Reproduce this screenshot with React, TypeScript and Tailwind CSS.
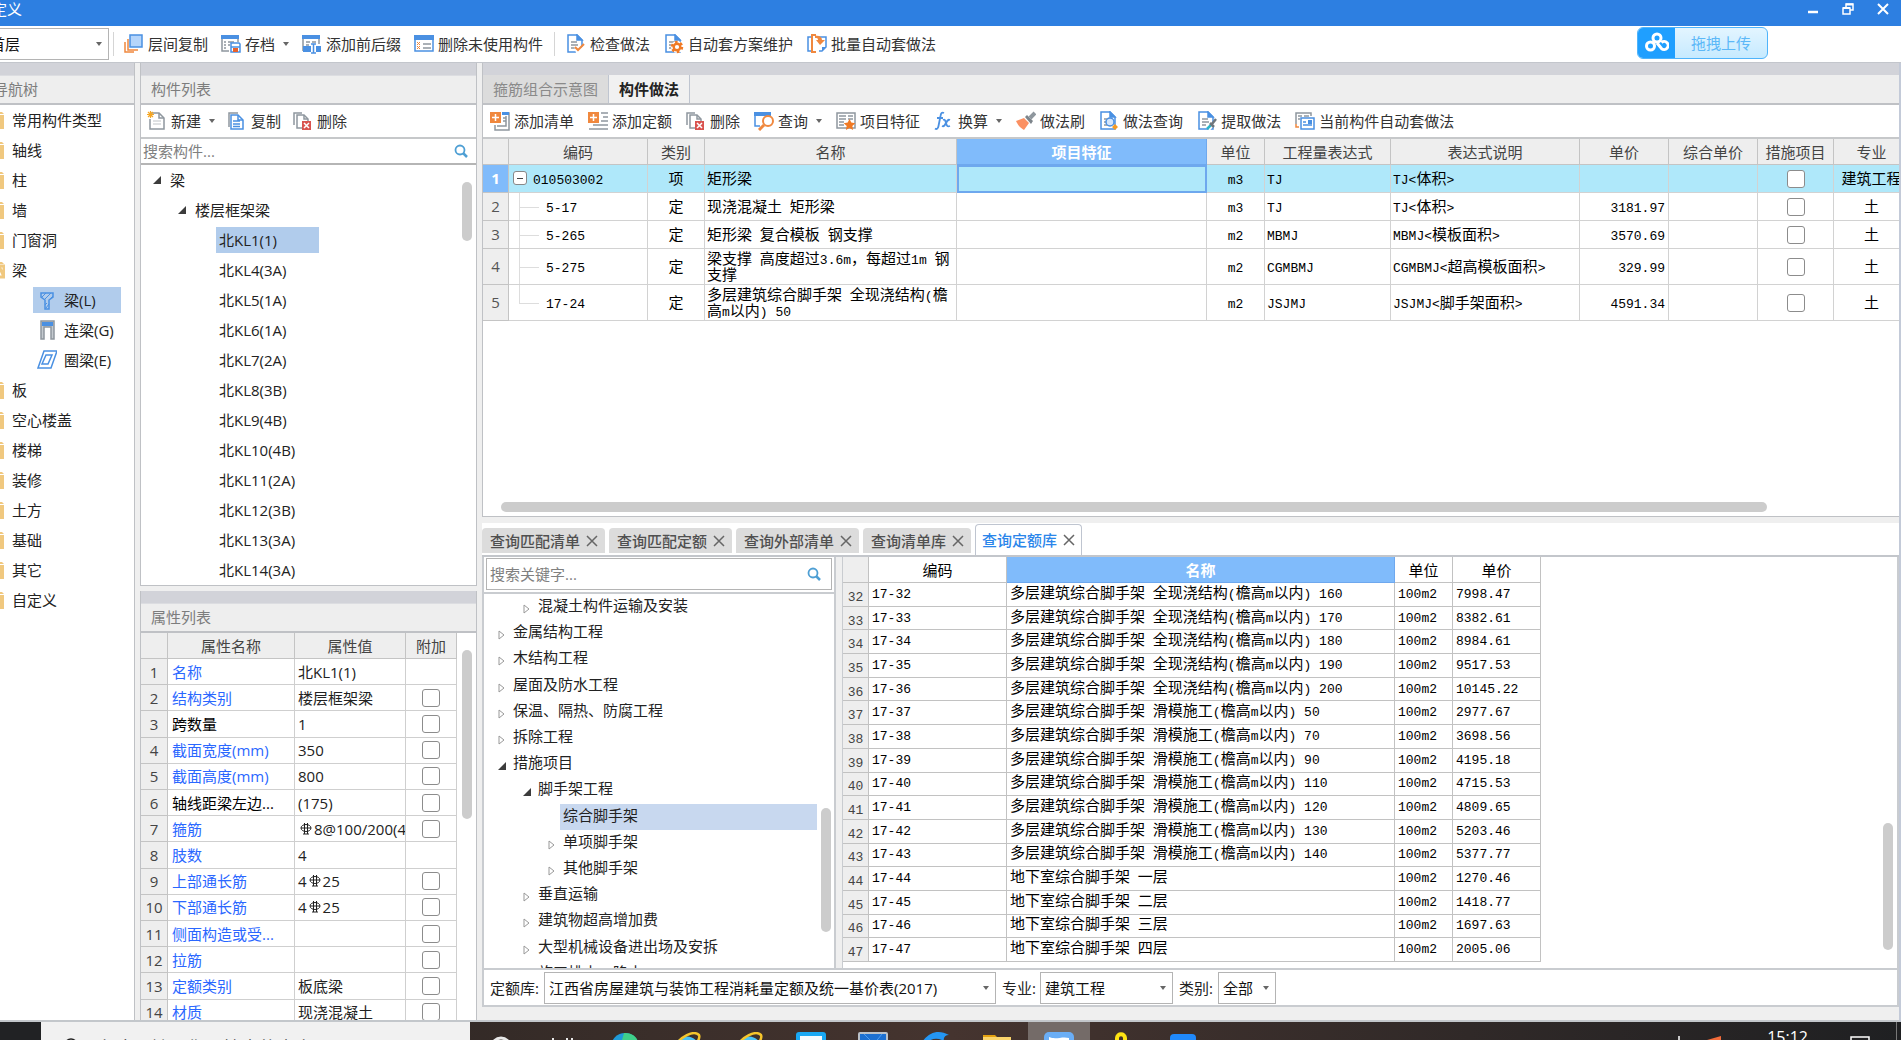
import { Fragment, type ReactNode } from 'react';

interface ToolItem {
  label: string;
  icon: ReactNode;
  caret?: boolean;
}

const BLUE = '#4a90e2';
const GRAY = '#8f979e';
const ORANGE = '#f0883e';

/* ---------- icons ---------- */

function Svg({ children }: { children: ReactNode }) {
  return (
    <svg className="h-5 w-5 shrink-0" viewBox="0 0 20 20" fill="none" strokeWidth="1.5" aria-hidden="true">
      {children}
    </svg>
  );
}

const CopyLayersIcon = () => (
  <Svg>
    <path d="M1 8v10h9" stroke={ORANGE} />
    <path d="M4 5v11h10" stroke={ORANGE} />
    <rect x="6" y="1" width="12" height="12" fill="#b5d5fb" stroke={BLUE} />
  </Svg>
);

const ArchiveIcon = () => (
  <Svg>
    <rect x="0" y="1" width="18" height="4" fill={BLUE} />
    <path d="M1 5v12h7M17 5v3" stroke={GRAY} />
    <path d="M3 8h2M3 11h2M3 14h2M7 8h6M7 11h2" stroke={GRAY} />
    <path d="M10 9h8l1 1v8h-9z" fill="#fff" stroke={BLUE} />
    <path d="M10 13h9" stroke={BLUE} />
    <rect x="12" y="14" width="5" height="4" fill="#e8612c" />
  </Svg>
);

const AffixIcon = () => (
  <Svg>
    <rect x="0" y="1" width="18" height="4" fill={BLUE} />
    <path d="M1 5v12M17 5v5" stroke={GRAY} />
    <path d="M4 8h4M4 11h3M10 8h4" stroke={GRAY} />
    <path d="M1 12h8v6H1zM14 12h5v6h-5z" fill={BLUE} />
    <path d="M9 10h5M11.500 10v9M9 19h5" stroke={BLUE} />
  </Svg>
);

const DeleteUnusedIcon = () => (
  <Svg>
    <rect x="1" y="2" width="18" height="15" fill="#fff" stroke={BLUE} />
    <rect x="0" y="1" width="20" height="5" fill={BLUE} />
    <path d="M3 8l3 3M6 8l-3 3M3 12l3 3M6 12l-3 3" stroke={ORANGE} strokeWidth="1" />
    <path d="M9 10h8M9 14h8" stroke={GRAY} />
  </Svg>
);

const DocBase = ({ color = BLUE }: { color?: string }) => (
  <>
    <path d="M2 1h9l5 5v12H2z" fill="#fff" stroke={color} />
    <path d="M11 1v5h5z" fill={color} stroke={color} />
    <path d="M5 8h6M5 11h7M5 14h4" stroke={GRAY} strokeWidth="1.300" />
  </>
);

const CheckDocIcon = () => (
  <Svg>
    <DocBase />
    <path d="M8 12l4 5 6-6v8h-8z" fill="#fff" />
    <path d="M9 13l3 3 6-6" stroke={ORANGE} strokeWidth="2" />
  </Svg>
);

const GearDocIcon = () => (
  <Svg>
    <DocBase />
    <circle cx="13" cy="13" r="6" fill="#fff" />
    <circle cx="13" cy="13" r="5" stroke="#f07a25" strokeWidth="2.500" strokeDasharray="2.600 2.636" />
    <circle cx="13" cy="13" r="3.300" stroke="#f07a25" strokeWidth="2.400" />
  </Svg>
);

const BatchIcon = () => (
  <Svg>
    <path d="M4 3H1v14h3" stroke={BLUE} />
    <path d="M12 3h7v10l-4 4h-3" fill="#fff" stroke={BLUE} />
    <path d="M19 13h-4v4z" fill={BLUE} />
    <path d="M9 1H5v17h4" stroke={ORANGE} strokeWidth="2" />
    <path d="M8 2c4-1 7 1 7 4h3l-5 5-4-5h2c0-2-1-2-3-2z" fill={ORANGE} />
  </Svg>
);

const NewIcon = () => (
  <Svg>
    <path d="M4 2h8l5 5v11H3V8" fill="#fff" stroke={GRAY} />
    <path d="M12 2v5h5" stroke={GRAY} />
    <path d="M6 10h8M6 13h8" stroke="#d5d8da" />
    <path d="M3.500 0v7M0 3.500h7M1 1l5 5M6 1L1 6" stroke="#f5a623" strokeWidth="1.200" />
  </Svg>
);

const CopyIcon = () => (
  <Svg>
    <path d="M2 16V2h9" stroke={GRAY} />
    <path d="M4 4h7l5 5v9H4z" fill="#fff" stroke={BLUE} />
    <path d="M11 4v5h5M6 10h7M6 13h7M6 15.500h7" stroke={BLUE} />
  </Svg>
);

const DeleteIcon = () => (
  <Svg>
    <path d="M1 14V2h8" stroke={GRAY} />
    <path d="M4 4h7l4 4v9H4z" fill="#fff" stroke={GRAY} />
    <path d="M11 4v4h4" stroke={GRAY} />
    <rect x="9" y="10" width="9" height="9" fill="#d9534f" />
    <path d="M11 12l5 5M16 12l-5 5" stroke="#fff" />
  </Svg>
);

const AddListIcon = () => (
  <Svg>
    <path d="M12 2h7v17H5v-5" stroke={GRAY} />
    <path d="M12 1h7v3h-7z" fill={BLUE} />
    <path d="M13 7h3M13 10h3M7 15h9V5" stroke={GRAY} />
    <rect x="0" y="1" width="11" height="11" fill={ORANGE} />
    <path d="M5.500 3v7M2 6.500h7" stroke="#fff" />
  </Svg>
);

const AddQuotaIcon = () => (
  <Svg>
    <path d="M13 2h7M15 6h5M13 10h7M5 14h15M1 18h19" stroke={GRAY} />
    <rect x="0" y="1" width="11" height="11" fill={ORANGE} />
    <path d="M5.500 3v7M2 6.500h7" stroke="#fff" />
  </Svg>
);

const QueryIcon = () => (
  <Svg>
    <path d="M6 15H1V2h15v2" stroke={BLUE} />
    <rect x="0" y="1" width="17" height="4" fill={BLUE} />
    <circle cx="14" cy="10" r="5" fill="#fff" stroke={ORANGE} strokeWidth="2" />
    <path d="M10 14l-5 5" stroke={ORANGE} strokeWidth="3" />
  </Svg>
);

const FeatureIcon = () => (
  <Svg>
    <rect x="1" y="2" width="18" height="15" stroke={GRAY} />
    <path d="M3 5h7M3 8h7M3 11h5M3 14h5M12 5h5M12 8h5" stroke={GRAY} strokeWidth="1.300" />
    <path d="M13.500 8l1.800 3.600 4 .6-3 2.800.8 4-3.600-1.900L9.900 19l.8-4-3-2.800 4-.6z" fill="#f07a25" />
  </Svg>
);

const FxIcon = () => (
  <Svg>
    <path
      d="M10 2c-2-1-3 0-3.500 3L4.500 15c-.5 3-2 3.500-3.500 2.500M3 7h6M9 9c2-1 2 0 3 3s1 4 4 3M16 9c-2-1-3 1-4 3s-2 4-4 3"
      stroke={BLUE}
      strokeWidth="1.800"
    />
  </Svg>
);

const BrushIcon = () => (
  <Svg>
    <path d="M0 10l8-3 5 5-5 7c-3-2-5-3-8-9z" fill="#fb9062" />
    <path d="M9 6l2-2 6 6-2 3z" fill="#7d858b" />
    <path d="M14 7l5-5" stroke="#8f979e" strokeWidth="4" />
  </Svg>
);

const DocQueryIcon = () => (
  <Svg>
    <DocBase />
    <circle cx="11" cy="11" r="4" fill="#d5e6fb" stroke={BLUE} />
    <path d="M16 13l3 3-3 3-3-3z" fill="#f59a23" />
  </Svg>
);

const ExtractIcon = () => (
  <Svg>
    <DocBase />
    <path d="M11 18l5-6" stroke="#fff" strokeWidth="5" />
    <path d="M10 18l5-5" stroke="#2bb5c8" strokeWidth="2.500" />
    <path d="M13 12l4 4M15 13l4-5" stroke="#6f767c" strokeWidth="2.500" />
  </Svg>
);

const AutoApplyIcon = () => (
  <Svg>
    <path d="M1 13V2h15v3M3 5h4M3 8h2M9 5h5" stroke={GRAY} />
    <path d="M1 13v3h3" stroke={ORANGE} />
    <rect x="6" y="7" width="13" height="11" fill="#fff" stroke={BLUE} />
    <path d="M8 11h3M8 14h9" stroke={BLUE} />
    <path d="M13 9h4v4h-4z" fill={BLUE} />
  </Svg>
);

const SearchIcon = () => (
  <svg className="h-3.5 w-3.5 shrink-0" viewBox="0 0 14 14" fill="none" stroke="#4e9fd4" aria-hidden="true">
    <circle cx="6" cy="6" r="4.500" strokeWidth="1.800" />
    <path d="M9 9l4 4" strokeWidth="2.500" />
  </svg>
);

const Caret = () => (
  <svg className="h-1 w-1.5 shrink-0" viewBox="0 0 6 4" aria-hidden="true">
    <path d="M0 0h6L3 4z" fill="#666" />
  </svg>
);

const OpenArrow = () => (
  <svg className="h-2 w-2 shrink-0" viewBox="0 0 8 8" aria-hidden="true">
    <path d="M8 0v8H0z" fill="#3c3c3c" />
  </svg>
);

const ClosedArrow = () => (
  <svg className="h-2.5 w-2 shrink-0" viewBox="0 0 8 10" fill="none" aria-hidden="true">
    <path d="M1 1l5 4-5 4z" stroke="#999" />
  </svg>
);

const CloseIcon = () => (
  <svg className="h-3 w-3 shrink-0" viewBox="0 0 12 12" aria-hidden="true">
    <path d="M1 1l10 10M11 1L1 11" stroke="#666" strokeWidth="1.500" />
  </svg>
);

const FolderIcon = ({ open }: { open?: boolean }) => (
  <svg className="h-4.5 w-3.5 shrink-0" viewBox="0 0 14 18" fill="none" aria-hidden="true">
    <path d="M5 1h6l2 2H3z" fill="#f0c87f" />
    {open ? (
      <path d="M2 5h11v11H2zM8 5l5 11" stroke="#f0c87f" strokeWidth="3" />
    ) : (
      <path d="M0 4h13v14H0z" fill="#f0c87f" />
    )}
  </svg>
);

const BeamIcon = () => (
  <Svg>
    <path d="M4 3h12v4l-4 3v9H8v-9L4 7z" stroke={BLUE} />
    <path d="M5 7l4-4M8 9l6-6M10 13l-2 2M12 14l-3 4M12 10l4-4" stroke={BLUE} strokeWidth="1" />
  </Svg>
);

const CouplingBeamIcon = () => (
  <Svg>
    <path d="M4 1h13v18h-3V7H7v12H4z" fill="#c4cacf" stroke={GRAY} />
    <rect x="5" y="2" width="11" height="4" fill={BLUE} />
  </Svg>
);

const RingBeamIcon = () => (
  <Svg>
    <path d="M7 1h13l-6 17H1z" stroke={BLUE} />
    <path d="M9 5h6l-4 9H5z" stroke={BLUE} />
  </Svg>
);

// HRB400 bar sign
const RebarMark = () => (
  <svg className="mx-0.5 mb-1 inline-block h-3 w-3" viewBox="0 0 12 12" fill="none" stroke="#222" aria-hidden="true">
    <ellipse cx="6" cy="5" rx="5" ry="3.500" />
    <path d="M4.500 0v11M7.500 0v11M1 5h10M3 11h6" />
  </svg>
);

/* ---------- data ---------- */

const mainTools: ToolItem[] = [
  { label: '层间复制', icon: <CopyLayersIcon /> },
  { label: '存档', icon: <ArchiveIcon />, caret: true },
  { label: '添加前后缀', icon: <AffixIcon /> },
  { label: '删除未使用构件', icon: <DeleteUnusedIcon /> },
];

const schemeTools: ToolItem[] = [
  { label: '检查做法', icon: <CheckDocIcon /> },
  { label: '自动套方案维护', icon: <GearDocIcon /> },
  { label: '批量自动套做法', icon: <BatchIcon /> },
];

const componentTools: ToolItem[] = [
  { label: '新建', icon: <NewIcon />, caret: true },
  { label: '复制', icon: <CopyIcon /> },
  { label: '删除', icon: <DeleteIcon /> },
];

const methodTools: ToolItem[] = [
  { label: '添加清单', icon: <AddListIcon /> },
  { label: '添加定额', icon: <AddQuotaIcon /> },
  { label: '删除', icon: <DeleteIcon /> },
  { label: '查询', icon: <QueryIcon />, caret: true },
  { label: '项目特征', icon: <FeatureIcon /> },
  { label: '换算', icon: <FxIcon />, caret: true },
  { label: '做法刷', icon: <BrushIcon /> },
  { label: '做法查询', icon: <DocQueryIcon /> },
  { label: '提取做法', icon: <ExtractIcon /> },
  { label: '当前构件自动套做法', icon: <AutoApplyIcon /> },
];

const navBefore = ['常用构件类型', '轴线', '柱', '墙', '门窗洞'];
const navAfter = ['板', '空心楼盖', '楼梯', '装修', '土方', '基础', '其它', '自定义'];
const beamTypes = [
  { label: '梁(L)', icon: <BeamIcon />, active: true },
  { label: '连梁(G)', icon: <CouplingBeamIcon />, active: false },
  { label: '圈梁(E)', icon: <RingBeamIcon />, active: false },
];

const beams = [
  '北KL1(1)', '北KL4(3A)', '北KL5(1A)', '北KL6(1A)', '北KL7(2A)', '北KL8(3B)',
  '北KL9(4B)', '北KL10(4B)', '北KL11(2A)', '北KL12(3B)', '北KL13(3A)', '北KL14(3A)',
];

const properties: { name: string; value: ReactNode; plain?: boolean; extra: boolean }[] = [
  { name: '名称', value: '北KL1(1)', extra: false },
  { name: '结构类别', value: '楼层框架梁', extra: true },
  { name: '跨数量', value: '1', plain: true, extra: true },
  { name: '截面宽度(mm)', value: '350', extra: true },
  { name: '截面高度(mm)', value: '800', extra: true },
  { name: '轴线距梁左边...', value: '(175)', plain: true, extra: true },
  { name: '箍筋', value: <><RebarMark />8@100/200(4)</>, extra: true },
  { name: '肢数', value: '4', extra: false },
  { name: '上部通长筋', value: <>4<RebarMark />25</>, extra: true },
  { name: '下部通长筋', value: <>4<RebarMark />25</>, extra: true },
  { name: '侧面构造或受...', value: '', extra: true },
  { name: '拉筋', value: '', extra: true },
  { name: '定额类别', value: '板底梁', extra: true },
  { name: '材质', value: '现浇混凝土', extra: true },
];

const methodRows = [
  { code: '010503002', kind: '项', name: '矩形梁', unit: 'm3', expr: 'TJ', desc: 'TJ<体积>', price: '', major: '建筑工程' },
  { code: '5-17', kind: '定', name: '现浇混凝土 矩形梁', unit: 'm3', expr: 'TJ', desc: 'TJ<体积>', price: '3181.97', major: '土' },
  { code: '5-265', kind: '定', name: '矩形梁 复合模板 钢支撑', unit: 'm2', expr: 'MBMJ', desc: 'MBMJ<模板面积>', price: '3570.69', major: '土' },
  { code: '5-275', kind: '定', name: '梁支撑 高度超过3.6m，每超过1m 钢支撑', unit: 'm2', expr: 'CGMBMJ', desc: 'CGMBMJ<超高模板面积>', price: '329.99', major: '土' },
  { code: '17-24', kind: '定', name: '多层建筑综合脚手架 全现浇结构(檐高m以内) 50', unit: 'm2', expr: 'JSJMJ', desc: 'JSJMJ<脚手架面积>', price: '4591.34', major: '土' },
];

const queryTabs = ['查询匹配清单', '查询匹配定额', '查询外部清单', '查询清单库'];

const chapters = [
  { label: '混凝土构件运输及安装', level: 1, state: 'closed' },
  { label: '金属结构工程', level: 0, state: 'closed' },
  { label: '木结构工程', level: 0, state: 'closed' },
  { label: '屋面及防水工程', level: 0, state: 'closed' },
  { label: '保温、隔热、防腐工程', level: 0, state: 'closed' },
  { label: '拆除工程', level: 0, state: 'closed' },
  { label: '措施项目', level: 0, state: 'open' },
  { label: '脚手架工程', level: 1, state: 'open' },
  { label: '综合脚手架', level: 2, state: 'selected' },
  { label: '单项脚手架', level: 2, state: 'closed' },
  { label: '其他脚手架', level: 2, state: 'closed' },
  { label: '垂直运输', level: 1, state: 'closed' },
  { label: '建筑物超高增加费', level: 1, state: 'closed' },
  { label: '大型机械设备进出场及安拆', level: 1, state: 'closed' },
  { label: '施工排水、降水', level: 1, state: 'closed' },
];

const levelPadding = ['pl-[14px]', 'pl-[39px]', 'pl-[64px]'];

const CAST = '多层建筑综合脚手架 全现浇结构(檐高m以内) ';
const SLIP = '多层建筑综合脚手架 滑模施工(檐高m以内) ';
const BASEMENT = '地下室综合脚手架 ';

const quotas: [string, string][] = [
  [CAST + '160', '7998.47'],
  [CAST + '170', '8382.61'],
  [CAST + '180', '8984.61'],
  [CAST + '190', '9517.53'],
  [CAST + '200', '10145.22'],
  [SLIP + '50', '2977.67'],
  [SLIP + '70', '3698.56'],
  [SLIP + '90', '4195.18'],
  [SLIP + '110', '4715.53'],
  [SLIP + '120', '4809.65'],
  [SLIP + '130', '5203.46'],
  [SLIP + '140', '5377.77'],
  [BASEMENT + '一层', '1270.46'],
  [BASEMENT + '二层', '1418.77'],
  [BASEMENT + '三层', '1697.63'],
  [BASEMENT + '四层', '2005.06'],
];

/* ---------- shared parts ---------- */

// Grid cells set half-width runs in a monospaced face beside full-width characters
function GridText({ text }: { text: string }) {
  return (
    <>
      {text.split(/([\x20-\x7e]+)/).map((part, i) =>
        i % 2 ? (
          <span key={i} className="font-['Liberation_Mono',monospace] text-[13px] leading-none">
            {part}
          </span>
        ) : (
          <Fragment key={i}>{part}</Fragment>
        ),
      )}
    </>
  );
}

function ToolButton({ item }: { item: ToolItem }) {
  return (
    <button type="button" className="flex h-7 shrink-0 items-center gap-1 rounded px-1.5 whitespace-nowrap text-[#333] hover:bg-[#e8f1fc]">
      {item.icon}
      <span>{item.label}</span>
      {item.caret && (
        <span className="ml-1">
          <Caret />
        </span>
      )}
    </button>
  );
}

function PanelHeader({ title, className }: { title: string; className: string }) {
  return (
    <>
      <div className="h-3 shrink-0 bg-[#d2d3d9]" />
      <h2 className={`flex h-[30px] shrink-0 items-center border-t border-b-2 border-t-[#dcdde1] border-b-[#bfc1c5] pb-0.5 text-[#7d7d7d] ${className}`}>
        {title}
      </h2>
    </>
  );
}

function Checkbox({ label }: { label: string }) {
  return (
    <input
      type="checkbox"
      aria-label={label}
      className="mx-auto block h-[18px] w-[18px] appearance-none rounded-[3px] border border-[#8c8c8c] bg-white checked:bg-[#4a90e2]"
    />
  );
}

function Dropdown({ id, value, className }: { id: string; value: string; className: string }) {
  return (
    <div className={`relative ${className}`}>
      <select id={id} aria-label={value} className="h-8 w-full appearance-none border border-[#b4b4b4] bg-white pr-5 pl-1 text-[#111]">
        <option>{value}</option>
      </select>
      <span className="pointer-events-none absolute top-3.5 right-[7px] flex">
        <Caret />
      </span>
    </div>
  );
}

/* ---------- panels ---------- */

function TitleBar() {
  return (
    <header className="flex h-[26px] shrink-0 items-center justify-between bg-[#2d7fe1] text-white">
      <h1 className="-ml-2 pb-2 leading-[18px]">定义</h1>
      <div className="flex items-center gap-[23px] pr-3 pb-2">
        <button type="button" aria-label="最小化">
          <svg className="h-3 w-3" viewBox="0 0 12 12"><path d="M1 9h10" stroke="#fff" strokeWidth="2.500" /></svg>
        </button>
        <button type="button" aria-label="还原">
          <svg className="h-3 w-3" viewBox="0 0 12 12" fill="none" stroke="#fff">
            <path d="M1 5h7v6H1zM4 4V1h7v6H8" strokeWidth="1.500" />
            <path d="M1 5h7M4 1.500h7" strokeWidth="2" />
          </svg>
        </button>
        <button type="button" aria-label="关闭">
          <svg className="h-3 w-3" viewBox="0 0 12 12"><path d="M1 1l10 10M11 1L1 11" stroke="#fff" strokeWidth="2" /></svg>
        </button>
      </div>
    </header>
  );
}

function MainToolbar() {
  return (
    <div className="relative flex h-[37px] shrink-0 items-center border-b border-[#c3c6cc] bg-white">
      <Dropdown id="floor" value="首层" className="-ml-[15px] w-[124px]" />
      <span className="mx-1 h-6 w-px bg-[#d5d5d5]" />
      <div className="flex gap-px">
        {mainTools.map((item) => <ToolButton key={item.label} item={item} />)}
      </div>
      <span className="mx-[5px] h-6 w-px bg-[#d5d5d5]" />
      <div className="flex gap-0.5">
        {schemeTools.map((item) => <ToolButton key={item.label} item={item} />)}
      </div>
      <button
        type="button"
        className="absolute top-px right-[133px] flex h-8 w-[131px] overflow-hidden rounded-md border border-[#4fb4fb] bg-gradient-to-b from-[#e3f5ff] to-[#c6eaff] text-[#5cb8f8]"
      >
        <span className="flex h-full w-[37px] items-center justify-center bg-[#1f9fff]">
          <svg className="h-6 w-6" viewBox="0 0 24 24" fill="none" stroke="#fff" strokeWidth="3" aria-hidden="true">
            <circle cx="12" cy="7" r="4" />
            <circle cx="5.500" cy="15" r="4" />
            <path d="M12 12l4.500 5.500a4 4 0 1 0 0-6" />
          </svg>
        </span>
        <span className="flex h-full flex-1 items-center justify-center">拖拽上传</span>
      </button>
    </div>
  );
}

function NavTree() {
  const row = (label: string, open = false) => (
    <li key={label} className="flex h-[30px] items-center gap-[7px] whitespace-nowrap">
      <FolderIcon open={open} />
      {label}
    </li>
  );
  return (
    <nav className="flex w-[135px] shrink-0 flex-col overflow-hidden border-r border-[#bfc1c5] bg-white">
      <PanelHeader title="导航树" className="bg-[#eee] [text-indent:-7px]" />
      <ul className="-ml-[9px]">
        {navBefore.map((label) => row(label))}
        {row('梁', true)}
        {beamTypes.map((type) => (
          <li key={type.label} className="flex h-[30px] items-center pl-[42px]">
            <a
              href="#beam"
              className={`flex h-[26px] w-[88px] items-center gap-[7px] pl-1 whitespace-nowrap ${type.active ? 'bg-[#b1ccec]' : ''}`}
            >
              {type.icon}
              {type.label}
            </a>
          </li>
        ))}
        {navAfter.map((label) => row(label))}
      </ul>
    </nav>
  );
}

function ComponentList() {
  return (
    <section className="relative shrink-0 border border-t-0 border-[#bfc1c5] bg-white">
      <PanelHeader title="构件列表" className="bg-[#eee] pl-[10px]" />
      <div className="flex h-[34px] items-center border-b-2 border-[#c6c8ca]">
        {componentTools.map((item) => <ToolButton key={item.label} item={item} />)}
      </div>
      <label className="flex h-[26px] items-center border-b-2 border-[#b5b5b5] pr-2 pl-0.5">
        <input type="text" aria-label="搜索构件" placeholder="搜索构件..." className="min-w-0 flex-1 outline-none placeholder:text-[#808080]" />
        <SearchIcon />
      </label>
      <ul>
        <li className="flex h-[30px] items-center gap-[9px] pl-3">
          <OpenArrow />梁
        </li>
        <li className="flex h-[30px] items-center gap-[9px] pl-[37px]">
          <OpenArrow />楼层框架梁
        </li>
        {beams.map((beam, i) => (
          <li key={beam} className="flex h-[30px] items-center pl-[75px]">
            <span className={`flex h-[26px] w-[103px] items-center pl-[3px] ${i === 0 ? 'bg-[#b1ccec]' : ''}`}>{beam}</span>
          </li>
        ))}
      </ul>
      <div className="absolute top-[119px] right-1 h-[59px] w-2.5 rounded-full bg-[#ccc]" />
    </section>
  );
}

function PropertyList() {
  const head = 'border-r border-b border-[#c4c4c4] bg-[#eee] font-normal text-[#444]';
  const cell = 'border-r border-b border-[#cfcfcf] overflow-hidden whitespace-nowrap';
  return (
    <section className="relative flex min-h-0 flex-1 flex-col overflow-hidden border-x border-[#bfc1c5] bg-white">
      <PanelHeader title="属性列表" className="bg-[#eee] pl-[10px]" />
      <table className="h-[393px] w-[316px] shrink-0 table-fixed border-separate border-spacing-0">
        <colgroup>
          <col className="w-[27px]" />
          <col className="w-[127px]" />
          <col className="w-[111px]" />
          <col className="w-[51px]" />
        </colgroup>
        <thead>
          <tr className="h-[26px]">
            <th className={head} />
            <th className={head}>属性名称</th>
            <th className={head}>属性值</th>
            <th className={head}>附加</th>
          </tr>
        </thead>
        <tbody className="leading-5">
          {properties.map((prop, i) => (
            <tr key={prop.name}>
              <th scope="row" className="border-r border-b border-[#c4c4c4] bg-[#eee] text-center font-normal text-[#444]">{i + 1}</th>
              <td className={`${cell} pl-1 ${prop.plain ? 'text-black' : 'text-[#2a67ff]'}`}>{prop.name}</td>
              <td className={`${cell} pl-[3px] text-[#222]`}>{prop.value}</td>
              <td className={cell}>{prop.extra && <Checkbox label={`附加 ${prop.name}`} />}</td>
            </tr>
          ))}
        </tbody>
      </table>
      <div className="absolute top-[59px] right-1 h-[169px] w-2.5 rounded-full bg-[#ccc]" />
    </section>
  );
}

function MethodPanel() {
  const cell = 'border-r border-b border-[#d2d2d2]';
  const columns = ['编码', '类别', '名称', '项目特征', '单位', '工程量表达式', '表达式说明', '单价', '综合单价', '措施项目', '专业'];
  return (
    <section className="relative flex min-h-0 flex-1 flex-col overflow-hidden border-b border-l border-[#bfc1c5] bg-white">
      <div className="h-3 shrink-0 bg-[#d2d3d9]" />
      <div role="tablist" className="flex h-[30px] shrink-0 border-b-2 border-[#bfc1c5] bg-[#eee]">
        <button role="tab" type="button" className="w-[126px] border-r border-[#bfc5d0] bg-[#dcdcdc] text-[#8a8a8a]">箍筋组合示意图</button>
        <button role="tab" type="button" aria-selected="true" className="w-[81px] border-r border-[#bfc5d0] bg-[#f1f1f1] font-bold text-[#222]">构件做法</button>
      </div>
      <div className="flex h-[34px] shrink-0 items-center gap-0.5 border-b-2 border-[#c6c8ca] pl-px">
        {methodTools.map((item) => <ToolButton key={item.label} item={item} />)}
      </div>
      <table className="w-[1427px] table-fixed border-separate border-spacing-0 text-black">
        <colgroup>
          <col className="w-[26px]" />
          <col className="w-[139px]" />
          <col className="w-[57px]" />
          <col className="w-[252px]" />
          <col className="w-[250px]" />
          <col className="w-[58px]" />
          <col className="w-[126px]" />
          <col className="w-[189px]" />
          <col className="w-[89px]" />
          <col className="w-[89px]" />
          <col className="w-[76px]" />
          <col className="w-[76px]" />
        </colgroup>
        <thead>
          <tr className="h-[26px] text-[#444]">
            <th className="border-r border-b border-[#c4c4c4] bg-[#eee]" />
            {columns.map((column) => (
              <th
                key={column}
                className={`border-r border-b ${
                  column === '项目特征' ? 'border-[#6ea8ee] bg-[#80bbfb] font-bold text-white' : 'border-[#c4c4c4] bg-[#eee] font-normal'
                }`}
              >
                {column}
              </th>
            ))}
          </tr>
        </thead>
        <tbody className="leading-[15px]">
          {methodRows.map((row, i) => (
            <tr key={row.code} className={`${i === 0 ? 'bg-[#afe8fa]' : ''} ${i < 3 ? 'h-7' : 'h-9'}`}>
              <th
                scope="row"
                className={`border-r border-b border-[#c4c4c4] text-center ${i === 0 ? 'bg-[#80bbfb] font-bold text-white' : 'bg-[#eee] font-normal text-[#555]'}`}
              >
                {i + 1}
              </th>
              <td className={`${cell} relative ${i === 0 ? 'pl-6' : 'pl-[37px]'}`}>
                {i === 0 ? (
                  <button
                    type="button"
                    aria-label="折叠"
                    className="absolute top-1.5 left-1 flex h-[14px] w-[14px] items-center justify-center rounded-[3px] border border-[#888] bg-white"
                  >
                    <span className="h-px w-1.5 bg-[#444]" />
                  </button>
                ) : (
                  <>
                    <span className={`absolute top-0 left-2.5 w-px bg-[#ddd] ${i === methodRows.length - 1 ? 'h-1/2' : 'h-full'}`} />
                    <span className="absolute top-1/2 left-2.5 h-px w-5 bg-[#ddd]" />
                  </>
                )}
                <GridText text={row.code} />
              </td>
              <td className={`${cell} text-center`}>{row.kind}</td>
              <td className={`${cell} pl-0.5`}><GridText text={row.name} /></td>
              <td className={i === 0 ? 'border-2 border-[#6ea8ee]' : cell} />
              <td className={`${cell} text-center`}><GridText text={row.unit} /></td>
              <td className={`${cell} pl-0.5`}><GridText text={row.expr} /></td>
              <td className={`${cell} pl-0.5`}><GridText text={row.desc} /></td>
              <td className={`${cell} pr-[3px] text-right`}><GridText text={row.price} /></td>
              <td className={cell} />
              <td className={cell}><Checkbox label={`措施项目 ${row.code}`} /></td>
              <td className={`${cell} text-center whitespace-nowrap`}>{row.major}</td>
            </tr>
          ))}
        </tbody>
      </table>
      <div className="absolute right-[132px] bottom-1 left-[18px] h-2.5 rounded-full bg-[#ccc]" />
    </section>
  );
}

function ChapterTree() {
  return (
    <div className="relative flex w-[354px] shrink-0 flex-col overflow-hidden border-x-2 border-[#c9ccd0] bg-white">
      <div className="shrink-0 border-b-2 border-[#c9ccd0] px-0.5 pt-px pb-0.5">
        <label className="flex h-8 items-center border border-[#b4b4b4] pr-2.5 pl-[3px]">
          <input type="text" aria-label="搜索关键字" placeholder="搜索关键字..." className="min-w-0 flex-1 outline-none placeholder:text-[#808080]" />
          <SearchIcon />
        </label>
      </div>
      <ul className="grid h-[393px] shrink-0 auto-rows-fr">
        {chapters.map((item) => (
          <li key={item.label} className={`flex items-center whitespace-nowrap ${levelPadding[item.level]}`}>
            <span className="flex w-3 pt-1">
              {item.state === 'open' && <OpenArrow />}
              {item.state === 'closed' && <ClosedArrow />}
            </span>
            <span
              className={`flex h-full items-center pb-1 pl-[3px] ${item.state === 'selected' ? 'mr-[17px] flex-1 bg-[#c8d8ef]' : ''}`}
            >
              {item.label}
            </span>
          </li>
        ))}
      </ul>
      <div className="absolute right-[3px] bottom-9 h-[124px] w-2.5 rounded-full bg-[#ccc]" />
    </div>
  );
}

function QuotaTable() {
  const cell = 'border-r border-b border-[#c2c2c2] pb-1 pl-[3px] whitespace-nowrap';
  const head = 'border-r border-b border-[#c2c2c2] font-normal';
  return (
    <div className="relative flex-1 overflow-hidden border-r-2 border-l border-[#c9ccd0] bg-white">
      <table className="h-[405px] w-[698px] table-fixed border-separate border-spacing-0 text-black">
        <colgroup>
          <col className="w-[26px]" />
          <col className="w-[138px]" />
          <col className="w-[388px]" />
          <col className="w-[58px]" />
          <col className="w-[88px]" />
        </colgroup>
        <thead>
          <tr className="h-[26px]">
            <th className={`${head} bg-[#eee]`} />
            <th className={head}>编码</th>
            <th className="border-r border-b border-[#6ea8ee] bg-[#80bbfb] font-bold text-white">名称</th>
            <th className={head}>单位</th>
            <th className={head}>单价</th>
          </tr>
        </thead>
        <tbody className="leading-4">
          {quotas.map(([name, price], i) => (
            <tr key={name}>
              <th scope="row" className="border-r border-b border-[#c2c2c2] bg-[#eee] pt-0.5 text-center font-normal text-[#444]">
                <GridText text={String(i + 32)} />
              </th>
              <td className={cell}><GridText text={`17-${i + 32}`} /></td>
              <td className={cell}><GridText text={name} /></td>
              <td className={cell}><GridText text="100m2" /></td>
              <td className={cell}><GridText text={price} /></td>
            </tr>
          ))}
        </tbody>
      </table>
      <div className="absolute right-1 bottom-[18px] h-[127px] w-2.5 rounded-full bg-[#ccc]" />
    </div>
  );
}

function QueryPanel() {
  return (
    <section className="flex shrink-0 flex-col">
      <div role="tablist" className="flex h-[34px] items-end gap-1 border-b-2 border-[#c3c6cb] bg-white">
        {queryTabs.map((tab) => (
          <button key={tab} role="tab" type="button" className="mb-0.5 flex h-[25px] items-center gap-1.5 rounded-t bg-[#dcdcdc] pr-[7px] pl-2 font-medium text-[#505050]">
            {tab}
            <CloseIcon />
          </button>
        ))}
        <button
          role="tab"
          type="button"
          aria-selected="true"
          className="flex h-[31px] items-center gap-1.5 rounded-t border border-b-0 border-[#bfc5d0] bg-white px-1.5 font-medium text-[#2b86ea]"
        >
          查询定额库
          <CloseIcon />
        </button>
      </div>
      <div className="flex h-[411px] gap-[6px]">
        <ChapterTree />
        <QuotaTable />
      </div>
      <form className="flex h-[39px] items-center border-2 border-[#c9ccd0] bg-white pl-1.5">
        <label htmlFor="library" className="w-[54px]">定额库:</label>
        <Dropdown id="library" value="江西省房屋建筑与装饰工程消耗量定额及统一基价表(2017)" className="w-[452px]" />
        <label htmlFor="major" className="ml-1.5 w-[38px]">专业:</label>
        <Dropdown id="major" value="建筑工程" className="w-[133px]" />
        <label htmlFor="category" className="ml-1.5 w-[39px]">类别:</label>
        <Dropdown id="category" value="全部" className="w-[58px]" />
      </form>
    </section>
  );
}

/* ---------- taskbar ---------- */

const ie = (
  <>
    <circle cx="15" cy="17" r="10" stroke="#4cc3f5" strokeWidth="5" />
    <path d="M7 18h17" stroke="#4cc3f5" strokeWidth="4" />
    <path d="M2 16C8 4 22-2 27 3c1 2 0 4-1 6" stroke="#f5c52c" strokeWidth="2.500" />
  </>
);

const taskApps: { name: string; icon: ReactNode }[] = [
  { name: 'Cortana', icon: <circle cx="15" cy="15" r="9" stroke="#e8e8e8" strokeWidth="3" /> },
  { name: '任务视图', icon: <path d="M5 6v4h14V6M24 6v18" stroke="#e8e8e8" strokeWidth="2" /> },
  {
    name: 'Edge',
    icon: (
      <>
        <circle cx="15" cy="15" r="14" fill="#1f9ad8" />
        <path d="M14 1c8-1 15 5 14 12-2 4-7 4-8 1-1-4-4-6-8-6z" fill="#3fd08a" />
      </>
    ),
  },
  { name: 'IE', icon: ie },
  { name: 'IE 2', icon: ie },
  {
    name: '文档',
    icon: (
      <>
        <rect width="30" height="30" rx="3" fill="#19a9f5" />
        <path d="M4 4h22v20H4z" fill="#f4fbff" />
      </>
    ),
  },
  {
    name: '远程桌面',
    icon: (
      <>
        <rect width="30" height="24" rx="2" fill="#b9c0c8" />
        <path d="M2 2h26v20H2z" fill="#1c6fd0" />
        <path d="M6 2l10 10 8-10" stroke="#4d9cf0" />
      </>
    ),
  },
  { name: '飞鸟', icon: <path d="M0 13C8 0 18-3 29 3c-4 0-6 3-5 6-7-4-16-3-19 6z" fill="#2496f3" /> },
  {
    name: '资源管理器',
    icon: (
      <>
        <path d="M1 3h12l3 3H1z" fill="#e3a010" />
        <path d="M1 5h28v20H1z" fill="#fbd56c" />
      </>
    ),
  },
  {
    name: '广联达',
    icon: (
      <>
        <rect width="30" height="30" rx="5" fill="#6aaef6" />
        <path d="M5 5c7 3 13-1 20 1v16H5z" fill="#fff" />
      </>
    ),
  },
  { name: '加密锁', icon: <path d="M11 10V6c0-5 8-5 8 0v5" stroke="#fde313" strokeWidth="4" /> },
  { name: '云盘', icon: <rect x="2" y="2" width="26" height="26" rx="4" fill="#2089fb" /> },
];

function Taskbar() {
  return (
    <footer className="flex h-[18px] shrink-0 items-start overflow-hidden bg-gradient-to-r from-[#23211f] via-[#45342f] to-[#1f2022] text-white">
      <button type="button" aria-label="开始" className="h-13 w-[41px] shrink-0 bg-[#212224] pt-3.5">
        <svg className="h-6 w-6" viewBox="0 0 24 24" fill="#fff"><path d="M0 2l9-1v10H0zM11 1l11-1v11H11z" /></svg>
      </button>
      <label className="flex h-13 w-[429px] shrink-0 items-center gap-4 bg-[#f1f1f1] pl-5">
        <svg className="h-5 w-5" viewBox="0 0 20 20" fill="none" stroke="#222" strokeWidth="1.500">
          <circle cx="10" cy="7" r="6" />
          <path d="M6 12l-5 6" />
        </svg>
        <input type="text" aria-label="搜索" placeholder="在这里输入你要搜索的内容" className="flex-1 text-[18px] outline-none placeholder:text-[#333]" />
      </label>
      {taskApps.map((app) => (
        <button
          key={app.name}
          type="button"
          aria-label={app.name}
          className={`flex h-13 w-[62px] shrink-0 justify-center pt-2.5 ${app.name === '广联达' ? 'bg-[#746b68]' : ''}`}
        >
          <svg className="h-[30px] w-[30px]" viewBox="0 0 30 30" fill="none">{app.icon}</svg>
        </button>
      ))}
      <div className="ml-auto flex h-13 shrink-0 items-start">
        <svg className="mt-3 mr-10 h-5 w-14" viewBox="0 0 56 20" fill="none">
          <path d="M8 2v16M1 7h14v6H1z" stroke="#fff" strokeWidth="1.500" />
          <path d="M36 6l14-4v10H36z" fill="#f26b3a" />
        </svg>
        <time className="mt-[5px] mr-[42px] text-base leading-5">15:12</time>
        <svg className="mt-3.5 mr-[26px] h-5 w-5" viewBox="0 0 20 20" fill="none" stroke="#fff"><path d="M1 1h18v14H1z" strokeWidth="1.500" /></svg>
        <span className="mr-1 h-13 w-px bg-[#777]" />
      </div>
    </footer>
  );
}

export default function App() {
  return (
    <div className="flex h-screen flex-col overflow-hidden bg-[#efefef] font-['Open_Sans','Noto_Sans_CJK_SC',sans-serif] text-[15px] leading-5 text-[#222]">
      <TitleBar />
      <MainToolbar />
      <main className="flex min-h-0 flex-1 gap-[5px] border-r-2 border-b-2 border-r-[#c3cad8] border-b-[#c3c7cb]">
        <NavTree />
        <div className="flex w-[337px] shrink-0 flex-col gap-[5px]">
          <ComponentList />
          <PropertyList />
        </div>
        <div className="flex min-w-0 flex-1 flex-col gap-[6px] pb-[13px]">
          <MethodPanel />
          <QueryPanel />
        </div>
      </main>
      <Taskbar />
    </div>
  );
}
